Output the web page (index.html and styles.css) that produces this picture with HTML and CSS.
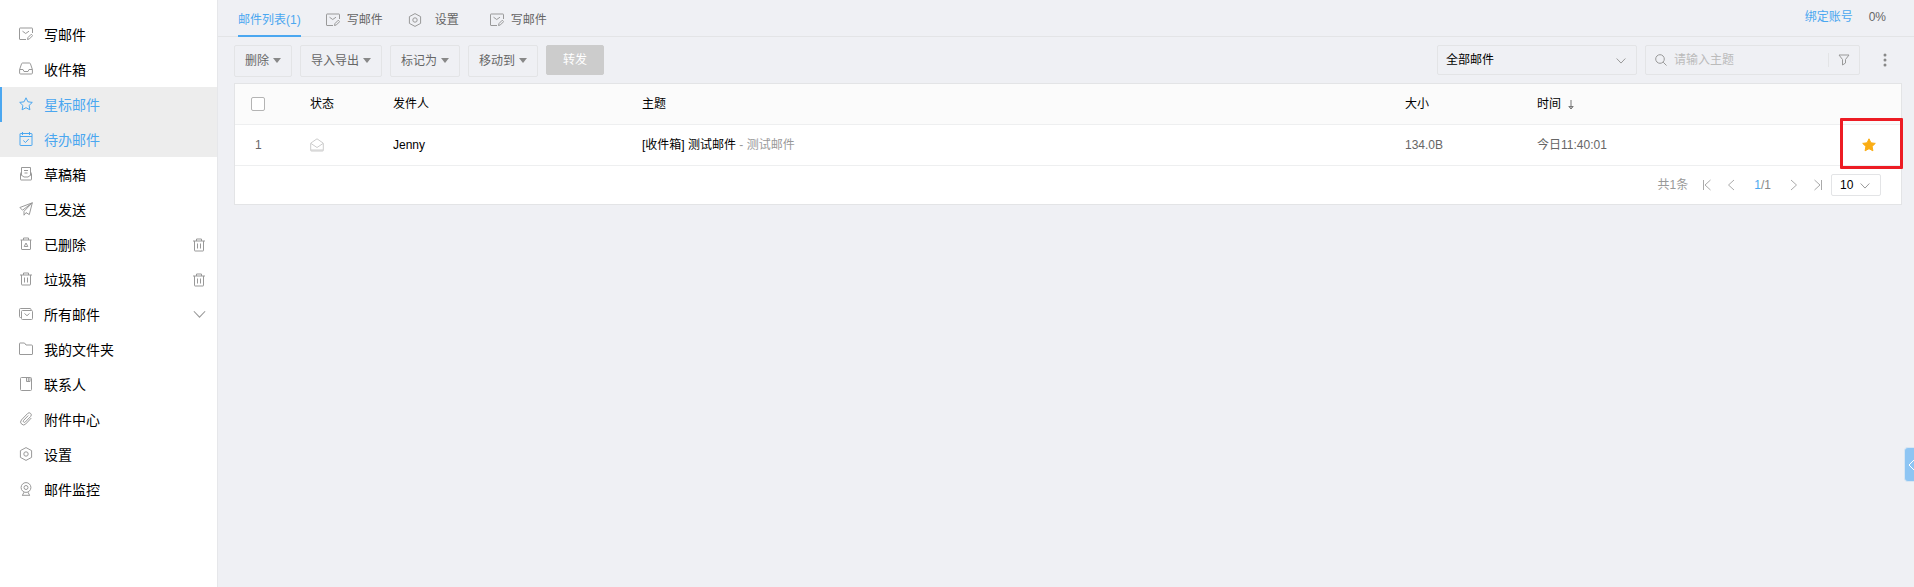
FILE: index.html
```
<!DOCTYPE html>
<html lang="zh-CN">
<head>
    <meta charset="UTF-8">
    <meta name="viewport" content="width=device-width, initial-scale=1.0">
    <title>星标邮件</title>
    <link rel="stylesheet" href="styles.css">
</head>
<body>
    <!-- Shared icons -->
    <svg class="sprite" aria-hidden="true">
        <symbol id="i-write" viewBox="0 0 14 14"><path d="M7 12.500H1a.5.5 0 0 1-.5-.5V1.500A.5.5 0 0 1 1 1h12a.5.5 0 0 1 .5.500V6M3.500 4.200l3.200 2.300L10 4.200M8.500 12.500l.5-2 3.300-3.300 1.400 1.400-3.300 3.300z"/></symbol>
        <symbol id="i-inbox" viewBox="0 0 14 14"><path d="M.6 7.500 2.600 1.700a1 1 0 0 1 .9-.7h7a1 1 0 0 1 .9.700L13.400 7.500v3.500a1 1 0 0 1-1 1H1.600a1 1 0 0 1-1-1zM.6 7.500H4l1 2h4l1-2h3.400"/></symbol>
        <symbol id="i-star" viewBox="0 0 14 14"><path d="M7 .8 8.900 4.800l4.400.6-3.200 3 .8 4.400L7 10.700l-3.900 2.100.8-4.400-3.200-3 4.400-.6z"/></symbol>
        <symbol id="i-todo" viewBox="0 0 14 14"><path d="M1.500 1.500h11a.5.5 0 0 1 .5.500v11a.5.5 0 0 1-.5.500h-11A.5.5 0 0 1 1 13V2a.5.5 0 0 1 .5-.5zM1 4.500h12M3.500 0v3M10.500 0v3M4.300 8.500l2.200 2L9.800 7"/></symbol>
        <symbol id="i-draft" viewBox="0 0 14 14"><path d="M2.500 8V.5h9V8M2.500 5 1.500 6.500v6a.5.5 0 0 0 .5.500h10a.5.5 0 0 0 .5-.5v-6L11.500 5M1.500 7.500l3.500 2.500h4l3.500-2.500M5 3.500h4M5.500 6h3"/></symbol>
        <symbol id="i-send" viewBox="0 0 14 14"><path d="M13.300.8.900 5.500 3.500 8.200 13.300.8 5 9.300v3.900l2-2.600 3.300 2z"/></symbol>
        <symbol id="i-deleted" viewBox="0 0 14 14"><path d="M1.500 3h11M4.500 3V1h5v2M2.500 3v9a.5.5 0 0 0 .5.500h8a.5.5 0 0 0 .5-.5V3M7 6 5.200 9.500h3.600z"/></symbol>
        <symbol id="i-trash" viewBox="0 0 14 14"><path d="M1 3h12M4.500 3V1h5v2M2.500 3v9.500a.5.5 0 0 0 .5.500h8a.5.5 0 0 0 .5-.5V3M5.500 5.500v5M8.500 5.500v5"/></symbol>
        <symbol id="i-all" viewBox="0 0 14 14"><path d="M3.500 3.500h9a1 1 0 0 1 1 1v7a1 1 0 0 1-1 1h-9a1 1 0 0 1-1-1v-7a1 1 0 0 1 1-1zM2.500 10.500h-1a1 1 0 0 1-1-1v-7a1 1 0 0 1 1-1h9.500a1 1 0 0 1 1 1v1M5.500 6.500l2.500 2.200 2.500-2.200"/></symbol>
        <symbol id="i-folder" viewBox="0 0 14 14"><path d="M1 1h4.500l1.500 2h5.500a1 1 0 0 1 1 1v8a.5.5 0 0 1-.5.500h-12a.5.5 0 0 1-.5-.5V1.500A.5.5 0 0 1 1 1z"/></symbol>
        <symbol id="i-contact" viewBox="0 0 14 14"><path d="M2.500.5h9a1 1 0 0 1 1 1v11a1 1 0 0 1-1 1h-9a1 1 0 0 1-1-1v-11a1 1 0 0 1 1-1zM7.500 1v3.500H11V1M9.300 1v3"/></symbol>
        <symbol id="i-clip" viewBox="0 0 14 14"><path d="m12.300 6-5.500 5.900a2.900 2.900 0 0 1-4.400-3.900l6.200-6.500a2.100 2.100 0 0 1 3.100 2.900L6.300 10a1.100 1.100 0 0 1-1.700-1.600L9.300 3.500"/></symbol>
        <symbol id="i-gear" viewBox="0 0 14 14"><path d="M7 .6 12.600 3.600v6.800L7 13.400 1.400 10.400V3.600z"/><circle cx="7" cy="7" r="2.200"/></symbol>
        <symbol id="i-monitor" viewBox="0 0 14 14"><circle cx="7" cy="5.500" r="4.900"/><circle cx="7" cy="5.500" r="2"/><path d="m5 10.200-1.500 3M9 10.200l1.500 3M3 13.300h8"/></symbol>
        <symbol id="i-down" viewBox="0 0 12 12"><path d="m.8 3 5.200 5.500L11.200 3"/></symbol>
    </svg>

    <div class="app">
        <aside class="sidebar">
            <nav>
                <a href="#" class="nav-item"><svg class="icon"><use href="#i-write"/></svg><span>写邮件</span></a>
                <a href="#" class="nav-item"><svg class="icon"><use href="#i-inbox"/></svg><span>收件箱</span></a>
                <a href="#" class="nav-item active current"><svg class="icon"><use href="#i-star"/></svg><span>星标邮件</span></a>
                <a href="#" class="nav-item active"><svg class="icon"><use href="#i-todo"/></svg><span>待办邮件</span></a>
                <a href="#" class="nav-item"><svg class="icon"><use href="#i-draft"/></svg><span>草稿箱</span></a>
                <a href="#" class="nav-item"><svg class="icon"><use href="#i-send"/></svg><span>已发送</span></a>
                <div class="nav-row">
                    <a href="#" class="nav-item"><svg class="icon"><use href="#i-deleted"/></svg><span>已删除</span></a>
                    <button type="button" class="icon-btn" aria-label="清空已删除"><svg class="icon"><use href="#i-trash"/></svg></button>
                </div>
                <div class="nav-row">
                    <a href="#" class="nav-item"><svg class="icon"><use href="#i-trash"/></svg><span>垃圾箱</span></a>
                    <button type="button" class="icon-btn" aria-label="清空垃圾箱"><svg class="icon"><use href="#i-trash"/></svg></button>
                </div>
                <div class="nav-row">
                    <a href="#" class="nav-item"><svg class="icon"><use href="#i-all"/></svg><span>所有邮件</span></a>
                    <button type="button" class="icon-btn" aria-label="展开"><svg class="icon chevron-lg"><use href="#i-down"/></svg></button>
                </div>
                <a href="#" class="nav-item"><svg class="icon"><use href="#i-folder"/></svg><span>我的文件夹</span></a>
                <a href="#" class="nav-item"><svg class="icon"><use href="#i-contact"/></svg><span>联系人</span></a>
                <a href="#" class="nav-item"><svg class="icon"><use href="#i-clip"/></svg><span>附件中心</span></a>
                <a href="#" class="nav-item"><svg class="icon"><use href="#i-gear"/></svg><span>设置</span></a>
                <a href="#" class="nav-item"><svg class="icon"><use href="#i-monitor"/></svg><span>邮件监控</span></a>
            </nav>
        </aside>

        <main class="main">
            <header class="topbar">
                <div class="tabs">
                    <a href="#" class="tab active">邮件列表(1)</a>
                    <a href="#" class="tab"><svg class="icon"><use href="#i-write"/></svg>写邮件</a>
                    <a href="#" class="tab tab-wide"><svg class="icon"><use href="#i-gear"/></svg>设置</a>
                    <a href="#" class="tab"><svg class="icon"><use href="#i-write"/></svg>写邮件</a>
                </div>
                <div class="account">
                    <a href="#">绑定账号</a>
                    <span>0%</span>
                </div>
            </header>

            <div class="toolbar">
                <button type="button" class="btn">删除<i class="caret"></i></button>
                <button type="button" class="btn">导入导出<i class="caret"></i></button>
                <button type="button" class="btn">标记为<i class="caret"></i></button>
                <button type="button" class="btn">移动到<i class="caret"></i></button>
                <button type="button" class="btn btn-disabled" disabled>转发</button>

                <div class="select filter-select">
                    <select aria-label="邮件范围"><option>全部邮件</option></select>
                    <svg class="icon chevron"><use href="#i-down"/></svg>
                </div>
                <div class="search">
                    <svg class="icon search-icon" viewBox="0 0 12 12"><circle cx="5" cy="5" r="4.300"/><path d="m8.200 8.200 3.300 3.300"/></svg>
                    <input type="text" placeholder="请输入主题" aria-label="请输入主题">
                    <button type="button" class="filter-btn" aria-label="筛选">
                        <svg class="icon filter-icon" viewBox="0 0 12 12"><path d="M1 1h10L7.500 5.500v3.500l-3 2V5.500z"/></svg>
                    </button>
                </div>
                <button type="button" class="more-btn" aria-label="更多">
                    <svg viewBox="0 0 4 14"><circle cx="2" cy="2" r="1.500"/><circle cx="2" cy="7" r="1.500"/><circle cx="2" cy="12" r="1.500"/></svg>
                </button>
            </div>

            <section class="list">
                <table>
                    <colgroup>
                        <col class="col-check"><col class="col-state"><col class="col-sender"><col>
                        <col class="col-size"><col class="col-time"><col class="col-star">
                    </colgroup>
                    <thead>
                        <tr>
                            <th class="check"><input type="checkbox" aria-label="全选"></th>
                            <th>状态</th>
                            <th>发件人</th>
                            <th>主题</th>
                            <th>大小</th>
                            <th>时间 <svg class="icon sort" viewBox="0 0 6 10"><path d="M3 0v9M.8 6.500h4.400L3 9z"/></svg></th>
                            <th></th>
                        </tr>
                    </thead>
                    <tbody>
                        <tr>
                            <td class="index">1</td>
                            <td><svg class="icon opened" viewBox="0 0 14 14"><path d="M.7 5.200 7 .8l6.300 4.400v7.300a.5.5 0 0 1-.5.500H1.200a.5.5 0 0 1-.5-.5zM1 5.500l6 4 6-4M1 12h12"/></svg></td>
                            <td class="dark">Jenny</td>
                            <td><span class="dark">[收件箱] 测试邮件</span> <span class="summary">- 测试邮件</span></td>
                            <td>134.0B</td>
                            <td>今日11:40:01</td>
                            <td class="star">
                                <button type="button" aria-label="取消星标"><svg class="icon starred"><use href="#i-star"/></svg></button>
                                <span class="highlight"></span>
                            </td>
                        </tr>
                    </tbody>
                </table>
                <footer class="pager">
                    <span class="total">共1条</span>
                    <button type="button" aria-label="首页"><svg class="icon" viewBox="0 0 10 12"><path d="M1.500 1v10M8.500 1 3 6l5.500 5"/></svg></button>
                    <button type="button" aria-label="上一页"><svg class="icon" viewBox="0 0 10 12"><path d="M8 1 2.500 6 8 11"/></svg></button>
                    <span class="pages"><b>1</b>/1</span>
                    <button type="button" aria-label="下一页"><svg class="icon" viewBox="0 0 10 12"><path d="M2 1l5.500 5L2 11"/></svg></button>
                    <button type="button" aria-label="末页"><svg class="icon" viewBox="0 0 10 12"><path d="M8.500 1v10M1.500 1 7 6l-5.500 5"/></svg></button>
                    <div class="select size-select">
                        <select aria-label="每页条数"><option>10</option></select>
                        <svg class="icon chevron"><use href="#i-down"/></svg>
                    </div>
                </footer>
            </section>
        </main>
    </div>

    <button type="button" class="drawer" aria-label="展开侧栏"><svg viewBox="0 0 6 12"><path d="M6 1 1 6l5 5"/></svg></button>
</body>
</html>
```
FILE: styles.css
```
* {
    box-sizing: border-box;
}
body {
    margin: 0;
    font-family: "Liberation Sans", "Noto Sans CJK SC", sans-serif;
    font-size: 12px;
    line-height: 18px;
    color: #666;
    background-color: #eff0f4;
}
a {
    color: inherit;
    text-decoration: none;
}
button, input, select {
    margin: 0;
    padding: 0;
    font: inherit;
    color: inherit;
    background: none;
    border: none;
    outline: none;
}
button {
    cursor: pointer;
}
.sprite {
    display: none;
}
.icon {
    display: block;
    flex: none;
    width: 14px;
    height: 14px;
    fill: none;
    stroke: #999;
    stroke-width: 1;
}
.app {
    display: flex;
    min-height: 100vh;
}

/* Sidebar */
.sidebar {
    flex: none;
    width: 218px;
    padding-top: 17px;
    background-color: #fff;
    border-right: 1px solid #e6e7ea;
}
.nav-item {
    display: flex;
    flex: 1;
    align-items: center;
    gap: 11px;
    height: 35px;
    padding-left: 16px;
    border-left: 2px solid transparent;
    font-size: 14px;
    color: #000;
}
.nav-item .icon {
    margin: 0 0 1px 1px;
}
.nav-item.active {
    color: #4ba7f0;
    background-color: #ededed;
}
.nav-item.active .icon {
    stroke: #4ba7f0;
}
.nav-item.current {
    border-left-color: #4ba7f0;
}
.nav-row {
    display: flex;
    align-items: center;
    padding-right: 11px;
}
.icon-btn .chevron-lg {
    width: 13px;
    height: 13px;
}

/* Tabs */
.main {
    flex: 1;
    min-width: 0;
}
.topbar {
    display: flex;
    justify-content: space-between;
    height: 37px;
    padding: 0 28px 0 20px;
    border-bottom: 1px solid #e3e4e6;
}
.tabs {
    display: flex;
    gap: 25px;
}
.tab {
    display: flex;
    align-items: center;
    gap: 7px;
    height: 37px;
    padding-top: 4px;
    border-bottom: 2px solid transparent;
}
.tab.active {
    color: #4ba7f0;
    border-bottom-color: #4ba7f0;
}
.tab-wide {
    gap: 13px;
    padding-right: 6px;
}
.account {
    display: flex;
    gap: 16px;
    padding-top: 8px;
}
.account a {
    color: #4ba7f0;
}

/* Toolbar */
.toolbar {
    display: flex;
    gap: 8px;
    padding: 8px 12px 0 16px;
}
.btn {
    display: flex;
    align-items: center;
    gap: 4px;
    height: 32px;
    padding: 0 10px;
    border: 1px solid #e3e4e6;
    border-radius: 2px;
}
.caret {
    margin-bottom: 1px;
    border: 4px solid transparent;
    border-top: 5px solid #888;
    border-bottom: none;
}
.btn-disabled {
    height: 30px;
    padding: 0 16px;
    color: #fff;
    background-color: #ccc;
    border-color: #ccc;
}
.select {
    position: relative;
    border: 1px solid #e3e4e6;
    border-radius: 2px;
}
.select select {
    display: block;
    width: 100%;
    height: 100%;
    padding-left: 8px;
    color: #000;
    appearance: none;
}
.select .chevron {
    position: absolute;
    top: 50%;
    right: 10px;
    width: 10px;
    height: 10px;
    margin-top: -4px;
    stroke-width: 1.2;
    pointer-events: none;
}
.filter-select {
    width: 200px;
    height: 30px;
    margin-left: auto;
}
.search {
    display: flex;
    align-items: center;
    width: 215px;
    height: 30px;
    padding-left: 9px;
    border: 1px solid #e3e4e6;
    border-radius: 2px;
}
.search-icon {
    width: 12px;
    height: 12px;
}
.search input {
    flex: 1;
    min-width: 0;
    padding-left: 7px;
}
.search input::placeholder {
    color: #bbb;
}
.filter-btn {
    padding: 1px 9px;
    border-left: 1px solid #e3e4e6;
}
.filter-icon {
    width: 12px;
    height: 12px;
}
.more-btn {
    width: 34px;
    height: 30px;
}
.more-btn svg {
    display: block;
    width: 4px;
    height: 14px;
    margin: 0 auto;
    fill: #888;
}

/* Mail list */
.list {
    margin: 6px 12px 0 16px;
    background-color: #fff;
    border: 1px solid #e3e4e6;
}
table {
    width: 100%;
    table-layout: fixed;
    border-collapse: separate;
    border-spacing: 0;
}
th, td {
    height: 41px;
    padding: 0;
    border-bottom: 1px solid #eeeff0;
    text-align: left;
    font-weight: normal;
}
th {
    color: #000;
    background-color: #fbfbfb;
}
.col-check {
    width: 75px;
}
.col-state {
    width: 83px;
}
.col-sender {
    width: 249px;
}
.col-size {
    width: 132px;
}
.col-time {
    width: 300px;
}
.col-star {
    width: 64px;
}
.check input {
    display: block;
    width: 14px;
    height: 14px;
    margin-left: 16px;
    background-color: #fff;
    border: 1px solid #b4b4b4;
    border-radius: 2px;
    appearance: none;
}
.index {
    padding-left: 20px;
}
.dark {
    color: #000;
}
.summary {
    color: #999;
}
.sort {
    display: inline-block;
    width: 6px;
    height: 10px;
    margin-left: 4px;
    vertical-align: middle;
    stroke: #777;
}
.opened {
    stroke: #ccc;
}
.star {
    position: relative;
}
.star button {
    display: block;
    margin: 0 auto;
}
.starred {
    fill: #faad14;
    stroke: #faad14;
}
.highlight {
    position: absolute;
    top: -7px;
    right: -2px;
    bottom: -4px;
    left: 3px;
    border: 3px solid #ed1c24;
    border-radius: 1px;
    pointer-events: none;
}

/* Pager */
.pager {
    display: flex;
    align-items: center;
    justify-content: flex-end;
    height: 38px;
    padding-right: 20px;
}
.pager .total {
    margin-right: 14px;
    color: #999;
}
.pager button {
    margin-right: 14px;
}
.pager button .icon {
    width: 10px;
    height: 12px;
    stroke: #aaa;
}
.pages {
    margin: 0 18px 0 4px;
    color: #888;
}
.pages b {
    font-weight: normal;
    color: #4ba7f0;
}
.pager button:last-of-type {
    margin-right: 8px;
}
.size-select {
    width: 50px;
    height: 22px;
}

/* Collapsed drawer handle on the right edge */
.drawer {
    position: fixed;
    top: 447px;
    right: 0;
    width: 10px;
    height: 35px;
    background-color: #8ec5f3;
    border: 1px solid #d8e6f3;
    border-right: none;
    border-radius: 4px 0 0 4px;
}
.drawer svg {
    display: block;
    width: 6px;
    height: 12px;
    margin-left: auto;
    fill: none;
    stroke: #fff;
}
```
